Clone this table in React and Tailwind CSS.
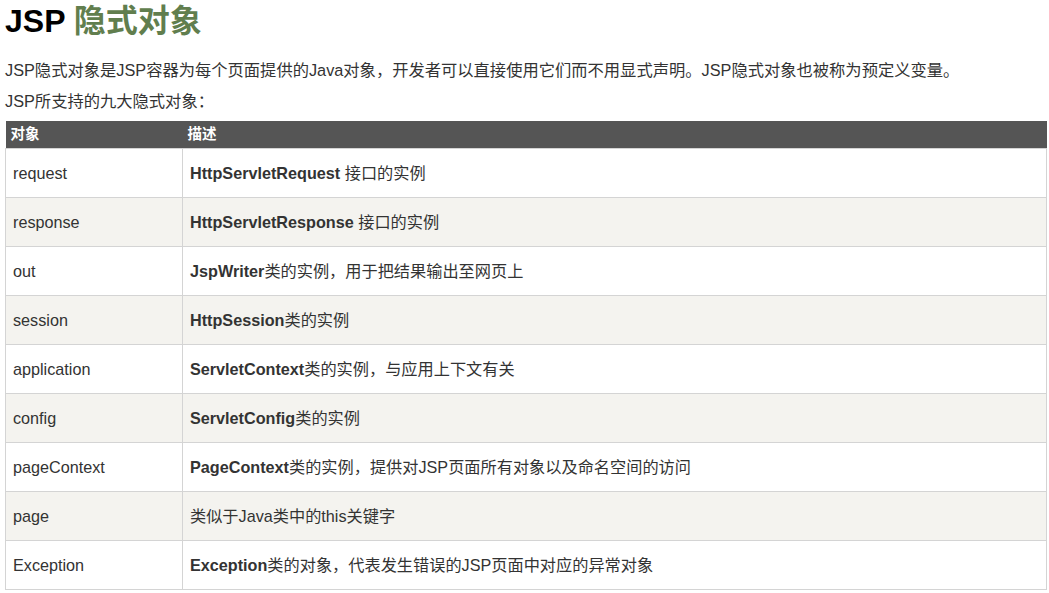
const rows = [
  ["request", <><b>HttpServletRequest</b> 接口的实例</>],
  ["response", <><b>HttpServletResponse</b> 接口的实例</>],
  ["out", <><b>JspWriter</b>类的实例，用于把结果输出至网页上</>],
  ["session", <><b>HttpSession</b>类的实例</>],
  ["application", <><b>ServletContext</b>类的实例，与应用上下文有关</>],
  ["config", <><b>ServletConfig</b>类的实例</>],
  ["pageContext", <><b>PageContext</b>类的实例，提供对JSP页面所有对象以及命名空间的访问</>],
  ["page", <>类似于Java类中的this关键字</>],
  ["Exception", <><b>Exception</b>类的对象，代表发生错误的JSP页面中对应的异常对象</>],
];

export default function App() {
  return (
    <div className="w-[1049px] h-[593px] bg-white overflow-hidden text-[#333] font-['Liberation_Sans','Noto_Sans_CJK_SC',sans-serif]">
      <div className="pl-[5px] pr-[2px]">
        <h1 className="text-[32px] font-bold leading-[40px] pt-[1px] text-black">
          JSP <span className="text-[#617e4e]">隐式对象</span>
        </h1>
        <p className="text-[16.3px] leading-[20px] mt-[19px]">
          JSP隐式对象是JSP容器为每个页面提供的Java对象，开发者可以直接使用它们而不用显式声明。JSP隐式对象也被称为预定义变量。
        </p>
        <p className="text-[16.3px] leading-[20px] mt-[11px]">JSP所支持的九大隐式对象：</p>
        <table className="mt-[10px] w-[1042px] border-collapse">
          <thead>
            <tr className="bg-[#555555] text-white text-[14.5px] leading-[18px] font-bold h-[27px]">
              <th className="text-left w-[177px] pl-[5px] font-bold">对象</th>
              <th className="text-left pl-[5px] font-bold">描述</th>
            </tr>
          </thead>
          <tbody>
            {rows.map(([k, v], i) => (
              <tr key={k} className={`h-[49px] text-[16.2px] ${i % 2 ? "bg-[#f4f3ef]" : "bg-white"}`}>
                <td className="border border-[#d4d4d4] pl-[7px] pt-[2px]">{k}</td>
                <td className="border border-[#d4d4d4] pl-[7px] pt-[2px]">{v}</td>
              </tr>
            ))}
          </tbody>
        </table>
      </div>
    </div>
  );
}
